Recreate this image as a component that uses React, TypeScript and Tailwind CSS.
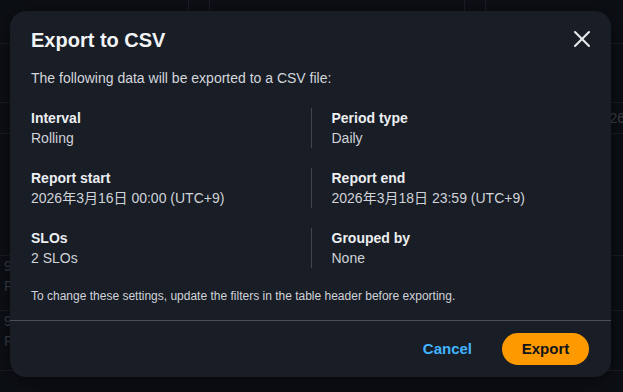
import { X } from 'lucide-react';

const fields = [
  { label: 'Interval', value: 'Rolling' },
  { label: 'Period type', value: 'Daily' },
  { label: 'Report start', value: '2026年3月16日 00:00 (UTC+9)' },
  { label: 'Report end', value: '2026年3月18日 23:59 (UTC+9)' },
  { label: 'SLOs', value: '2 SLOs' },
  { label: 'Grouped by', value: 'None' },
];

function BackgroundTable() {
  return (
    <div className="h-[392px] w-[623px] overflow-hidden bg-[#0c0f14] text-[14px] text-[#3a3f48]">
      <div className="flex h-[44px] border-b border-[#1a1e25]">
        <div className="w-[189px] border-r border-[#1a1e25]" />
        <div className="w-[21px] border-r border-[#1a1e25]" />
        <div className="w-[255px] border-r border-[#1a1e25]" />
        <div className="w-[21px] border-r border-[#1a1e25]" />
      </div>
      <div className="h-[58px]" />
      <div className="flex h-[32px] items-center justify-between border-y border-[#1a1e25]">
        <span className="-ml-[14px]">fo</span>
        <span className="-mr-[2px]">26</span>
      </div>
      <div className="h-[122px] border-b border-[#1a1e25]" />
      <div className="h-[55px] border-b border-[#1a1e25] pl-[4px] leading-[20px]">
        <div>9</div>
        <div>F</div>
      </div>
      <div className="h-[60px] border-b border-[#1a1e25] pl-[4px] leading-[20px]">
        <div>9</div>
        <div>F</div>
      </div>
    </div>
  );
}

export default function App() {
  return (
    <div
      className="relative h-[392px] w-[623px] overflow-hidden"
      style={{ fontFamily: '"Liberation Sans", Arial, "Noto Sans CJK JP", sans-serif' }}
    >
      <BackgroundTable />

      {/* Modal */}
      <div className="absolute left-[10px] top-[11px] w-[601px] rounded-[16px] bg-[#181d26] shadow-[0_4px_20px_rgba(0,0,0,0.5)]">
        <div className="px-[21px] pt-[15px]">
          <div className="flex items-start justify-between">
            <h2 className="text-[20px] font-bold leading-[28px] text-[#f2f3f5]">Export to CSV</h2>
            <button className="-mr-[6px] mt-[-1px] text-[#e6e8eb]">
              <X size={28} strokeWidth={1.8} />
            </button>
          </div>
          <p className="mt-[14px] text-[14px] leading-[20px] text-[#d4d6db]">
            The following data will be exported to a CSV file:
          </p>

          <div className="mt-[20px] grid grid-cols-2 gap-y-[20px]">
            {fields.map((f, i) => (
              <div
                key={f.label}
                className={i % 2 === 1 ? 'border-l border-[#3f444d] pl-[20px]' : ''}
              >
                <div className="text-[14px] font-bold leading-[20px] text-[#eceef1]">{f.label}</div>
                <div className="text-[14px] leading-[20px] text-[#d0d3d8]">{f.value}</div>
              </div>
            ))}
          </div>

          <p className="mt-[20px] text-[12px] leading-[16px] text-[#d0d3d8]">
            To change these settings, update the filters in the table header before exporting.
          </p>
        </div>

        <div className="mt-[16px] border-t border-[#4a4f58]" />

        <div className="flex items-center justify-end gap-[14px] px-[22px] pb-[12px] pt-[12px]">
          <button className="px-[16px] text-[15px] font-bold leading-[32px] text-[#42b4ff]">
            Cancel
          </button>
          <button className="h-[32px] w-[87px] rounded-full bg-[#ff9900] text-[15px] font-bold text-[#0f141a]">
            Export
          </button>
        </div>
      </div>
    </div>
  );
}
